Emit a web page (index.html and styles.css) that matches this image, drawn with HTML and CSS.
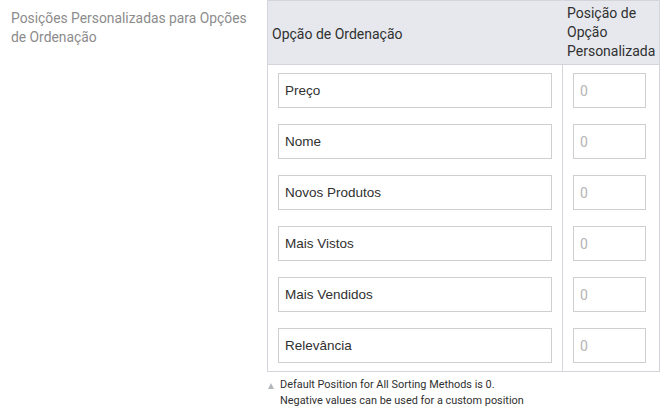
FILE: index.html
```html
<!DOCTYPE html>
<html>
<head>
<meta charset="utf-8">
<link rel="stylesheet" href="styles.css">
</head>
<body>
<div class="field">
  <div class="field-label">Posições Personalizadas para Opções de Ordenação</div>
  <div class="field-control">
    <table class="grid">
      <colgroup>
        <col class="c-name">
        <col class="c-pos">
      </colgroup>
      <thead>
        <tr>
          <th class="col-name">Opção de Ordenação</th>
          <th class="col-pos">Posição de Opção Personalizada</th>
        </tr>
      </thead>
      <tbody>
        <tr><td class="col-name"><input class="txt" value="Preço"></td><td class="col-pos"><input class="num" placeholder="0"></td></tr>
        <tr><td class="col-name"><input class="txt" value="Nome"></td><td class="col-pos"><input class="num" placeholder="0"></td></tr>
        <tr><td class="col-name"><input class="txt" value="Novos Produtos"></td><td class="col-pos"><input class="num" placeholder="0"></td></tr>
        <tr><td class="col-name"><input class="txt" value="Mais Vistos"></td><td class="col-pos"><input class="num" placeholder="0"></td></tr>
        <tr><td class="col-name"><input class="txt" value="Mais Vendidos"></td><td class="col-pos"><input class="num" placeholder="0"></td></tr>
        <tr><td class="col-name"><input class="txt" value="Relevância"></td><td class="col-pos"><input class="num" placeholder="0"></td></tr>
      </tbody>
    </table>
    <div class="note">
      <span class="note-icon"></span>
      <span class="note-text">Default Position for All Sorting Methods is 0.<br>Negative values can be used for a custom position</span>
    </div>
  </div>
</div>
</body>
</html>
```
FILE: styles.css
```css
html, body {
  margin: 0;
  padding: 0;
  background: #fff;
}
body {
  font-family: Roboto, "Liberation Sans", Arial, sans-serif;
  color: #303030;
}
.field {
  display: flex;
  align-items: flex-start;
}
.field-label {
  width: 245px;
  padding: 9px 0 0 11px;
  font-size: 13.85px;
  line-height: 19px;
  color: #8c8c8c;
  flex: none;
}
.field-control {
  margin-left: 11px;
  width: 393px;
  flex: none;
}
.grid {
  border-collapse: collapse;
  width: 393px;
  table-layout: fixed;
  border: 1px solid #d3d5da;
}
.c-name {
  width: 295px;
}
.grid th {
  box-sizing: border-box;
  background: #e6e8ee;
  font-weight: normal;
  text-align: left;
  font-size: 14px;
  line-height: 19px;
  color: #303030;
  height: 64px;
  padding: 0;
  vertical-align: middle;
  border-bottom: 1px solid #d3d5da;
}
.grid th.col-name {
  padding-left: 4px;
  padding-top: 4px;
  border-right: 1px solid #e6e8ee;
}
.grid th.col-pos {
  padding-left: 4px;
  padding-right: 2px;
}
.grid td {
  padding: 8px 10px 8px 10px;
  height: 34px;
  vertical-align: top;
}
.grid td.col-name {
  border-right: 1px solid #d3d5da;
  padding-right: 10px;
}
.grid td.col-pos {
  padding-right: 13px;
}
.txt, .num {
  display: block;
  box-sizing: border-box;
  height: 35px;
  width: 100%;
  margin: 0;
  border: 1px solid #cfcfcf;
  background: #fff;
  font-family: "Liberation Sans", Arial, sans-serif;
  font-size: 13.5px;
  color: #303030;
  padding: 0 6px;
  outline: none;
}
.num {
  font-family: Roboto, "Liberation Sans", Arial, sans-serif;
  font-size: 14px;
}
.num::placeholder {
  color: #b5b5b5;
}
.note {
  display: flex;
  align-items: flex-start;
  margin-top: 5px;
  padding-left: 1px;
  font-size: 10.9px;
  line-height: 16px;
  color: #303030;
}
.note-icon {
  flex: none;
  width: 0;
  height: 0;
  margin-top: 6px;
  margin-right: 6px;
  border-left: 3.5px solid transparent;
  border-right: 3.5px solid transparent;
  border-bottom: 6px solid #b3b6bc;
}
```
